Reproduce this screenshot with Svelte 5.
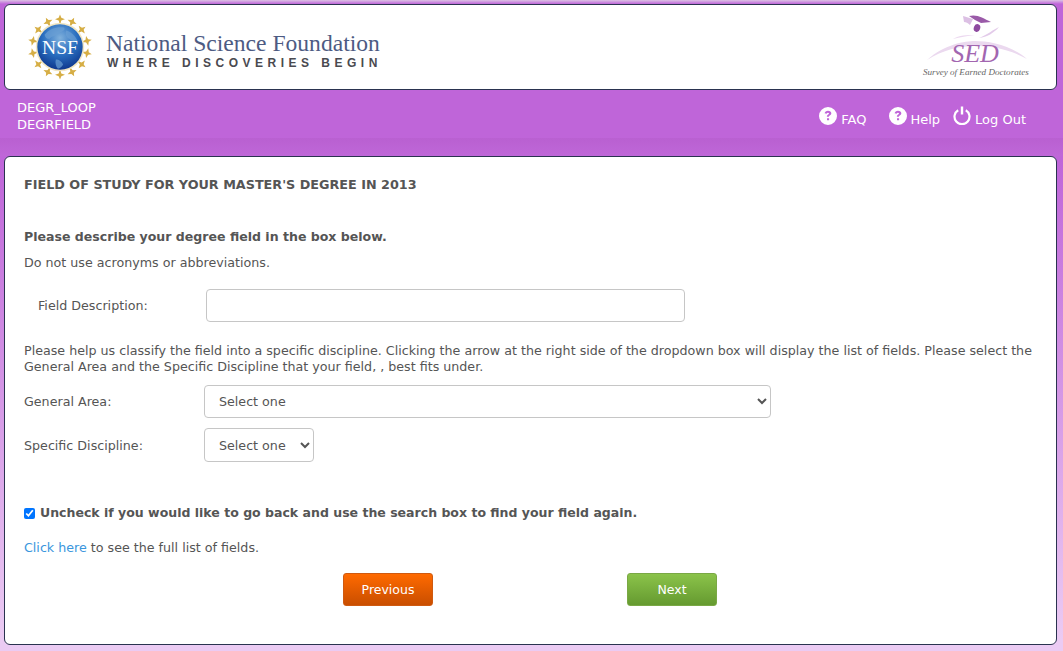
<script>
  const stars = Array.from({ length: 14 }, (_, i) => {
    const a = (i / 14) * Math.PI * 2 - Math.PI / 2;
    return { x: 32 + Math.cos(a) * 27, y: 32 + Math.sin(a) * 27, r: (a * 180) / Math.PI };
  });
</script>

<div class="page">
  <header class="banner">
    <div class="nsf">
      <svg class="seal" width="66" height="66" viewBox="0 0 64 64" aria-hidden="true">
        <defs>
          <radialGradient id="globe" cx="0.5" cy="0.3" r="0.75">
            <stop offset="0" stop-color="#7fb0dc" />
            <stop offset="0.5" stop-color="#2a6fc0" />
            <stop offset="1" stop-color="#0a2f86" />
          </radialGradient>
        </defs>
        {#each stars as s}
          <line x1="32" y1="32" x2={s.x} y2={s.y} stroke="#dcc378" stroke-width="1.6" />
          <g transform="translate({s.x} {s.y}) rotate({s.r})">
            <path d="M-4.6 0 L-1.3 -1.3 L0 -4.8 L1.3 -1.3 L4.6 0 L1.3 1.3 L0 4.8 L-1.3 1.3 Z" fill="#d6ae45" />
          </g>
        {/each}
        <circle cx="32" cy="32" r="23.5" fill="#f1e6c2" />
        <circle cx="32" cy="32" r="22" fill="url(#globe)" />
        <path d="M17 20c5-6 12-8 19-7 2 3-3 4-6 6-2 3-6 2-8 5-3 0-4-1-5-4zM38 16c4 1 9 5 11 10-3 1-6 0-8-2-3-1-4-5-3-8zM28 44c3 0 6 2 7 5-1 2-3 4-5 4-2-2-3-6-2-9z" fill="#6ba0d4" opacity=".7" />
        <text x="32" y="38.5" text-anchor="middle" class="seal-text">NSF</text>
      </svg>
      <div class="nsf-words">
        <div class="nsf-name">National Science Foundation</div>
        <div class="nsf-tag">WHERE DISCOVERIES BEGIN</div>
      </div>
    </div>
    <div class="sed">
      <svg width="106" height="46" viewBox="0 0 106 46" aria-hidden="true">
        <path d="M40 2 L50 5 L47 11 C45 9 43 8 41 8 Z" fill="#dcc0e4" />
        <path d="M46 2 C54 0 60 4 68 8 L58 9 C54 7 50 5 46 2 Z" fill="#9a5aa8" />
        <ellipse cx="54" cy="14" rx="3.2" ry="4" fill="#8e4aa0" transform="rotate(18 54 14)" />
        <path d="M30 25 C36 21 44 21 52 21 C44 22 37 23 30 25 Z" fill="#ecd8f0" />
        <path d="M56 24 C64 21 71 15 76 13 C71 19 64 23 56 24 Z" fill="#e3cbea" />
        <path d="M4 46 C22 30 42 27 52 27 C66 27 88 31 104 45 C86 35 68 32 52 32 C36 32 20 36 4 46 Z" fill="#ebd9ef" />
      </svg>
      <div class="sed-big">SED</div>
      <div class="sed-small">Survey of Earned Doctorates</div>
    </div>
  </header>

  <nav class="bar">
    <div class="crumbs">
      <div>DEGR_LOOP</div>
      <div>DEGRFIELD</div>
    </div>
    <div class="links">
      <span class="link faq">
        <svg width="18" height="18" viewBox="0 0 18 18" aria-hidden="true">
          <path fill-rule="evenodd" fill="#fff" d="M9 0a9 9 0 1 1 0 18A9 9 0 0 1 9 0zM5.6 6.2l2 .5c.2-.7.6-1 1.3-1 .7 0 1.1.3 1.1.8 0 .4-.2.7-.8 1.1-1 .6-1.3 1.1-1.3 2.2h2c0-.6.2-.9.9-1.3 1-.6 1.5-1.3 1.5-2.2 0-1.6-1.4-2.5-3.3-2.5-1.8 0-3 .9-3.4 2.4zM8 11.3v2h2.1v-2z" />
        </svg>
        <span>FAQ</span>
      </span>
      <span class="link help">
        <svg width="18" height="18" viewBox="0 0 18 18" aria-hidden="true">
          <path fill-rule="evenodd" fill="#fff" d="M9 0a9 9 0 1 1 0 18A9 9 0 0 1 9 0zM5.6 6.2l2 .5c.2-.7.6-1 1.3-1 .7 0 1.1.3 1.1.8 0 .4-.2.7-.8 1.1-1 .6-1.3 1.1-1.3 2.2h2c0-.6.2-.9.9-1.3 1-.6 1.5-1.3 1.5-2.2 0-1.6-1.4-2.5-3.3-2.5-1.8 0-3 .9-3.4 2.4zM8 11.3v2h2.1v-2z" />
        </svg>
        <span>Help</span>
      </span>
      <span class="link out">
        <svg width="18" height="19" viewBox="0 0 18 19" aria-hidden="true">
          <path d="M5.2 4.2a7.5 7.5 0 1 0 7.6 0" fill="none" stroke="#fff" stroke-width="2.2" />
          <path d="M9 0.5v8" fill="none" stroke="#fff" stroke-width="2.4" />
        </svg>
        <span>Log Out</span>
      </span>
    </div>
  </nav>
  <div class="band"></div>

  <main class="card">
    <h1>FIELD OF STUDY FOR YOUR MASTER'S DEGREE IN 2013</h1>
    <p class="lead">Please describe your degree field in the box below.</p>
    <p class="note">Do not use acronyms or abbreviations.</p>
    <div class="field-row">
      <label for="fd">Field Description:</label>
      <input id="fd" type="text" />
    </div>
    <p class="help-text">Please help us classify the field into a specific discipline. Clicking the arrow at the right side of the dropdown box will display the list of fields. Please select the General Area and the Specific Discipline that your field, , best fits under.</p>
    <div class="sel-row first">
      <label for="ga">General Area:</label>
      <select id="ga" class="wide"><option>Select one</option></select>
    </div>
    <div class="sel-row second">
      <label for="sd">Specific Discipline:</label>
      <select id="sd" class="narrow"><option>Select one</option></select>
    </div>
    <div class="check">
      <input id="un" type="checkbox" checked />
      <label for="un">Uncheck if you would like to go back and use the search box to find your field again.</label>
    </div>
    <p class="click"><a href="#top">Click here</a> to see the full list of fields.</p>
    <div class="buttons">
      <button class="prev">Previous</button>
      <button class="next">Next</button>
    </div>
  </main>
</div>

<style>
  :global(body) {
    margin: 0;
    background: #fff;
  }
  .page {
    box-sizing: border-box;
    width: 1063px;
    height: 651px;
    overflow: hidden;
    padding-top: 4px;
    font-family: Verdana, "DejaVu Sans", sans-serif;
    font-size: 12.68px;
    color: #555;
    background: linear-gradient(#dcc3e4 0, #bf65d9 4px, #bf65d9 160px, #ebcbf3 640px);
  }
  .banner {
    box-sizing: border-box;
    height: 86px;
    margin: 0 6px 0 4px;
    background: #fff;
    border: 1px solid #2a3350;
    border-radius: 6px;
    display: flex;
    justify-content: space-between;
    align-items: flex-start;
    padding: 9px 27px 0 22px;
  }
  .nsf {
    display: flex;
    align-items: flex-start;
    gap: 13px;
  }
  .seal-text {
    font-family: "Liberation Serif", serif;
    font-size: 19px;
    fill: #fff;
    letter-spacing: 0;
  }
  .nsf-words {
    padding-top: 16px;
  }
  .nsf-name {
    font-family: "Liberation Serif", serif;
    font-size: 23.6px;
    line-height: 27px;
    color: #4d5b83;
    white-space: nowrap;
  }
  .nsf-tag {
    font-family: "Liberation Sans", sans-serif;
    font-weight: bold;
    font-size: 12px;
    line-height: 13px;
    letter-spacing: 4.5px;
    color: #4a4a50;
    white-space: nowrap;
    padding-left: 1px;
  }
  .sed {
    position: relative;
    width: 106px;
    height: 66px;
  }
  .sed svg {
    display: block;
  }
  .sed-big {
    position: absolute;
    left: 27px;
    top: 26px;
    width: 50px;
    text-align: center;
    font-family: "Liberation Serif", serif;
    font-style: italic;
    font-size: 26px;
    line-height: 28px;
    color: #a266b0;
  }
  .sed-small {
    position: absolute;
    left: 0;
    top: 53px;
    width: 105px;
    text-align: center;
    font-family: "Liberation Serif", serif;
    font-style: italic;
    font-size: 9.1px;
    line-height: 11px;
    color: #666;
    white-space: nowrap;
  }
  .bar {
    box-sizing: border-box;
    height: 48px;
    display: flex;
    justify-content: space-between;
    padding: 9px 37px 0 17px;
    color: #fff;
    font-size: 13px;
  }
  .crumbs {
    line-height: 17px;
  }
  .links {
    display: flex;
    align-items: flex-start;
    padding-top: 8px;
  }
  .link {
    display: flex;
    align-items: flex-start;
    gap: 4px;
  }
  .link span {
    padding-top: 5px;
    line-height: 16px;
  }
  .faq {
    margin-right: 23px;
  }
  .help {
    gap: 3px;
    margin-right: 13px;
  }
  .out svg {
    margin-top: -1px;
  }
  .band {
    height: 18px;
    background: linear-gradient(#b960d1, #bf67d8);
  }
  .card {
    box-sizing: border-box;
    height: 489px;
    margin: 0 6px 0 4px;
    background: #fff;
    border: 1px solid #2a3350;
    border-radius: 6px;
    padding: 20px 18px 0 19px;
  }
  h1 {
    margin: 0;
    font-size: 12.78px;
    line-height: 16px;
    font-weight: bold;
    color: #555;
  }
  p {
    margin: 0;
  }
  .lead {
    margin-top: 36px;
    font-weight: bold;
    font-size: 12.55px;
    line-height: 16px;
  }
  .note {
    margin-top: 10px;
    line-height: 16px;
  }
  .field-row {
    display: flex;
    align-items: center;
    margin-top: 18px;
    padding-left: 14px;
  }
  .field-row label {
    width: 168px;
  }
  input[type="text"] {
    box-sizing: border-box;
    width: 479px;
    height: 33px;
    border: 1px solid #c6c6c6;
    border-radius: 4px;
    background: #fff;
  }
  .help-text {
    margin-top: 21px;
    line-height: 16px;
  }
  .sel-row {
    display: flex;
    align-items: center;
  }
  .sel-row label {
    width: 180px;
  }
  .first {
    margin-top: 10px;
  }
  .second {
    margin-top: 10px;
  }
  select {
    box-sizing: border-box;
    font: inherit;
    color: #555;
    background: #fff;
    border: 1px solid #c6c6c6;
    border-radius: 4px;
    padding: 0 10px;
  }
  .wide {
    width: 567px;
    height: 33px;
  }
  .narrow {
    width: 110px;
    height: 34px;
  }
  .check {
    display: flex;
    align-items: center;
    margin-top: 43px;
    font-weight: bold;
    font-size: 12.52px;
    line-height: 16px;
  }
  .check input {
    margin: 0 5px 0 0;
    width: 11px;
    height: 11px;
  }
  .click {
    margin-top: 19px;
    line-height: 16px;
  }
  a {
    color: #3a96dd;
    text-decoration: none;
  }
  .buttons {
    display: flex;
    gap: 194px;
    margin-top: 17px;
    padding-left: 319px;
  }
  button {
    box-sizing: border-box;
    width: 90px;
    height: 33px;
    border-radius: 3px;
    color: #fff;
    font: inherit;
    font-size: 12.5px;
    padding: 0;
  }
  .prev {
    background: linear-gradient(#ff6a00, #c94e00);
    border: 1px solid #cf5a10;
  }
  .next {
    background: linear-gradient(#8bc34a, #659a30);
    border: 1px solid #7aa845;
  }
</style>
